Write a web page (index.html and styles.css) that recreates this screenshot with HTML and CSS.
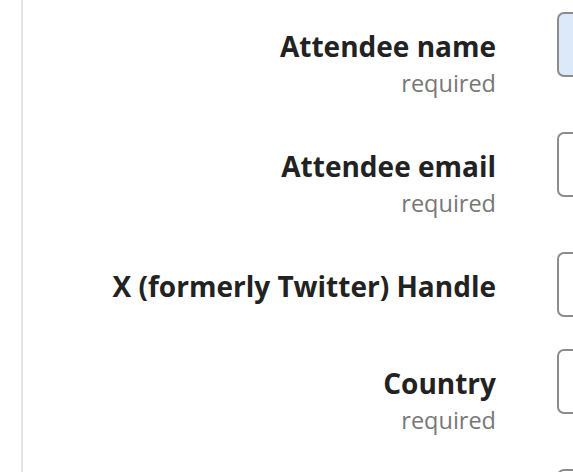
FILE: index.html
```html
<!DOCTYPE html>
<html lang="en">
<head>
    <meta charset="UTF-8">
    <meta name="viewport" content="width=device-width, initial-scale=1.0">
    <title>Attendee details</title>
    <link rel="stylesheet" href="styles.css">
</head>
<body>
    <div class="panel">
        <form class="attendee-form">
            <div class="field">
                <label class="field-label" for="name">
                    <span class="label-text">Attendee name</span>
                    <span class="hint">required</span>
                </label>
                <input type="text" id="name" class="field-input is-focused">
            </div>
            <div class="field">
                <label class="field-label" for="email">
                    <span class="label-text">Attendee email</span>
                    <span class="hint">required</span>
                </label>
                <input type="email" id="email" class="field-input">
            </div>
            <div class="field">
                <label class="field-label" for="handle">
                    <span class="label-text">X (formerly Twitter) Handle</span>
                </label>
                <input type="text" id="handle" class="field-input">
            </div>
            <div class="field">
                <label class="field-label" for="country">
                    <span class="label-text">Country</span>
                    <span class="hint">required</span>
                </label>
                <input type="text" id="country" class="field-input">
            </div>
            <div class="field">
                <div class="field-label"></div>
                <input type="text" id="company" class="field-input" aria-label="Company">
            </div>
        </form>
    </div>
</body>
</html>
```

FILE: styles.css
```css
body {
    margin: 0;
    padding: 0;
    background-color: #fff;
    font-family: 'Open Sans', sans-serif;
    overflow: hidden;
    height: 472px;
}
.panel {
    margin-left: 21px;
    border-left: 2px solid #e4e4e4;
    height: 100%;
    padding-top: 12px;
    box-sizing: border-box;
}
.field {
    display: flex;
    align-items: flex-start;
    gap: 61px;
    margin-bottom: 32px;
}
.field-label {
    width: 473px;
    flex-shrink: 0;
    min-height: 65px;
    padding-top: 16px;
    box-sizing: border-box;
    display: flex;
    flex-direction: column;
    align-items: flex-end;
    text-align: right;
}
.label-text {
    font-size: 28px;
    font-weight: 700;
    line-height: 36px;
    color: #222;
}
.hint {
    font-size: 23.5px;
    line-height: 33px;
    margin-top: 3px;
    color: #777;
}
.field-input {
    flex-shrink: 0;
    width: 200px;
    height: 65px;
    box-sizing: border-box;
    border: 2px solid #8c8c8c;
    border-radius: 7px;
    background-color: #fff;
    outline: none;
}
.field-input.is-focused {
    background-color: #dce9fb;
}
```
